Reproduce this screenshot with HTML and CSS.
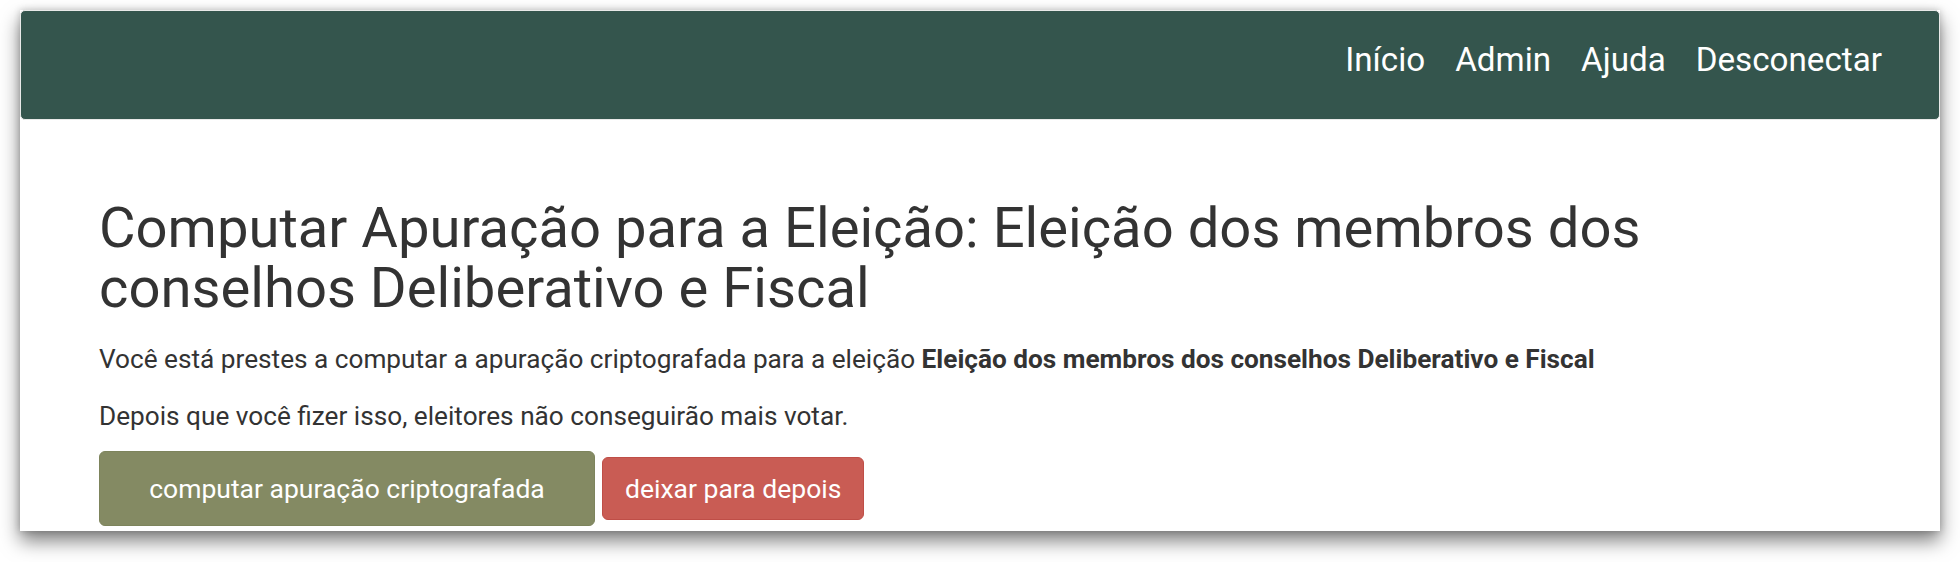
FILE: index.html
```html
<!DOCTYPE html>
<html lang="pt-BR">
<head>
<meta charset="utf-8">
<title>Computar Apuração</title>
<link rel="stylesheet" href="styles.css">
</head>
<body>
<div class="window">
  <nav class="navbar">
    <ul class="nav-links">
      <li><a href="#">Início</a></li>
      <li><a href="#">Admin</a></li>
      <li><a href="#">Ajuda</a></li>
      <li><a href="#">Desconectar</a></li>
    </ul>
  </nav>
  <main class="content">
    <h1 class="title">Computar Apuração para a Eleição: Eleição dos membros dos conselhos Deliberativo e Fiscal</h1>
    <p class="text">Você está prestes a computar a apuração criptografada para a eleição <b>Eleição dos membros dos conselhos Deliberativo e Fiscal</b></p>
    <p class="text">Depois que você fizer isso, eleitores não conseguirão mais votar.</p>
    <div class="actions">
      <button class="btn btn-primary">computar apuração criptografada</button>
      <button class="btn btn-danger">deixar para depois</button>
    </div>
  </main>
</div>
</body>
</html>
```
FILE: styles.css
```css
* { box-sizing: border-box; }
html, body { margin: 0; padding: 0; background: #fff; }
body {
  font-family: Roboto, "Liberation Sans", sans-serif;
  color: #333;
  height: 562px;
  overflow: hidden;
}
.window {
  margin: 10px 20px 0;
  height: 521px;
  background: #fff;
  overflow: hidden;
  box-shadow: 0 10px 18px rgba(0,0,0,0.5), 0 0 7px rgba(0,0,0,0.2);
}
.navbar {
  height: 110px;
  background: #34554d;
  border: 1px solid #e9e9e9;
  border-radius: 5px;
  display: flex;
  justify-content: flex-end;
  padding: 29px 57px 0 0;
}
.nav-links {
  list-style: none;
  margin: 0;
  padding: 0;
  display: flex;
  gap: 30px;
}
.nav-links a {
  color: #fff;
  text-decoration: none;
  font-size: 33.2px;
  line-height: 40px;
  display: block;
}
.content {
  padding: 78px 60px 0 79px;
}
.title {
  margin: 0 0 23px;
  font-size: 56.2px;
  line-height: 60px;
  font-weight: 400;
  color: #333;
}
.text {
  margin: 0 0 21px;
  font-size: 26.2px;
  line-height: 36px;
}
.text b { font-weight: 700; }
.actions {
  display: flex;
  align-items: center;
  gap: 7px;
  margin-top: -4px;
}
.btn {
  font-family: Roboto, "Liberation Sans", sans-serif;
  font-size: 26.5px;
  color: #fff;
  border: 1px solid transparent;
  border-radius: 6px;
  cursor: pointer;
}
.btn-primary {
  width: 496px;
  height: 75px;
  background: #848a63;
  border-color: #7d845c;
}
.btn-danger {
  height: 63px;
  padding: 0 22px;
  background: #c95c54;
  border-color: #bf4e47;
}
```
